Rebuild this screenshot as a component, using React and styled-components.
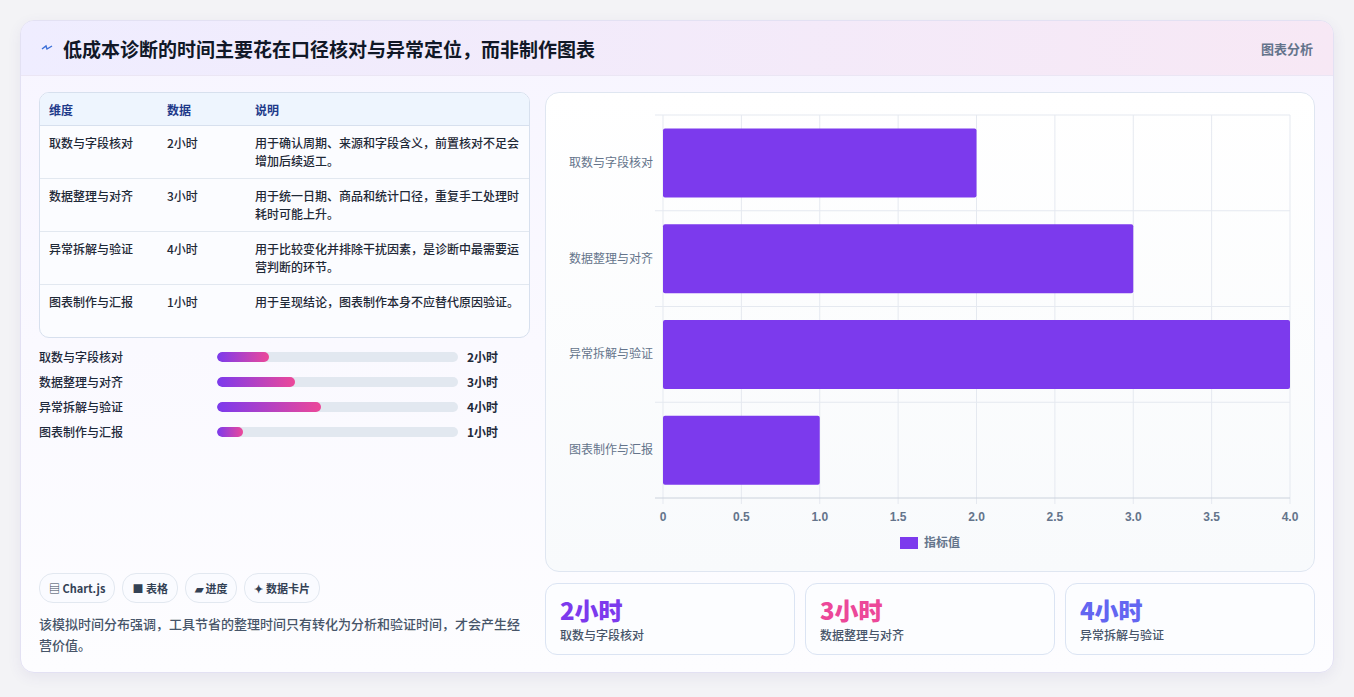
import React from 'react';
import styled, { createGlobalStyle } from 'styled-components';

const Global = createGlobalStyle`
  html, body { margin: 0; background: #f3f3f6; }
  body { font-family: "Noto Sans CJK SC", "Noto Sans", sans-serif; color: #1e293b; }
`;

const rows = [
  { name: '取数与字段核对', value: 2, note: '用于确认周期、来源和字段含义，前置核对不足会增加后续返工。' },
  { name: '数据整理与对齐', value: 3, note: '用于统一日期、商品和统计口径，重复手工处理时耗时可能上升。' },
  { name: '异常拆解与验证', value: 4, note: '用于比较变化并排除干扰因素，是诊断中最需要运营判断的环节。' },
  { name: '图表制作与汇报', value: 1, note: '用于呈现结论，图表制作本身不应替代原因验证。' },
];

const Page = styled.div`
  padding: 20px 20px 22px 20px;
`;
const Card = styled.div`
  background: linear-gradient(180deg, #f7f5ff 0%, #fdfdff 100%);
  border: 1px solid #e3e1f3;
  border-radius: 14px;
  overflow: hidden;
  box-shadow: 0 4px 14px rgba(80, 70, 140, 0.08);
`;
const Header = styled.div`
  height: 54px;
  display: flex;
  align-items: center;
  justify-content: space-between;
  padding: 0 20px;
  background: linear-gradient(90deg, #efedff 0%, #f7e8f5 100%);
  border-bottom: 1px solid #ebe6f4;
`;
const Title = styled.h1`
  margin: 0;
  font-size: 19px;
  font-weight: 700;
  color: #111827;
  display: flex;
  align-items: center;
  gap: 10px;
`;
const Tag = styled.span`
  font-size: 13px;
  color: #64748b;
  font-weight: 600;
`;
const Body = styled.div`
  display: grid;
  grid-template-columns: 491px 1fr;
  gap: 15px;
  padding: 16px 18px 17px 18px;
`;
const Left = styled.div`
  display: flex;
  flex-direction: column;
`;
const Table = styled.table`
  width: 100%;
  border-collapse: separate;
  border-spacing: 0;
  border: 1px solid #d7e0ee;
  border-radius: 10px;
  overflow: hidden;
  font-size: 12px;
  background: #fbfcff;
`;
const Th = styled.th`
  text-align: left;
  font-weight: 600;
  color: #1e3a8a;
  background: #eef5fe;
  height: 32px;
  padding: 0 9px;
  border-bottom: 1px solid #d7e0ee;
`;
const Td = styled.td`
  padding: 8px 9px;
  height: 36px;
  line-height: 18px;
  color: #1f2937;
  font-weight: 500;
  vertical-align: top;
  border-bottom: ${(p) => (p.last ? 'none' : '1px solid #e2e8f0')};
`;
const Progress = styled.div`
  margin-top: 10px;
  display: flex;
  flex-direction: column;
  gap: 9px;
`;
const PRow = styled.div`
  display: grid;
  grid-template-columns: 178px 241px 1fr;
  align-items: center;
  gap: 0;
  font-size: 12px;
  font-weight: 500;
  height: 16px;
`;
const Track = styled.div`
  height: 10px;
  background: #e2e8f0;
  border-radius: 5px;
  overflow: hidden;
`;
const Fill = styled.div`
  height: 100%;
  border-radius: 5px;
  background: linear-gradient(90deg, #7c3aed, #ec4899);
`;
const PVal = styled.span`
  padding-left: 9px;
  font-weight: 700;
`;
const Footer = styled.div`
  margin-top: auto;
`;
const Chips = styled.div`
  display: flex;
  gap: 7px;
`;
const Chip = styled.span`
  font-size: 11px;
  font-weight: 600;
  color: #334155;
  padding: 6px 9px;
  border: 1px solid #e2e8f0;
  border-radius: 14px;
  background: #fafbff;
`;
const Note = styled.p`
  margin: 10px 0 0 0;
  font-size: 13px;
  line-height: 21px;
  color: #475569;
  font-weight: 500;
`;
const Right = styled.div`
  display: flex;
  flex-direction: column;
  gap: 11px;
`;
const ChartBox = styled.div`
  height: 478px;
  border: 1px solid #dfe6f1;
  border-radius: 14px;
  background: linear-gradient(180deg, #ffffff, #f8fafc);
`;
const Stats = styled.div`
  display: grid;
  grid-template-columns: repeat(3, 1fr);
  gap: 10px;
`;
const Stat = styled.div`
  height: 72px;
  border: 1px solid #dbe4f3;
  border-radius: 12px;
  background: #fcfdff;
  padding: 10px 14px;
  box-sizing: border-box;
`;
const StatVal = styled.div`
  font-size: 24px;
  font-weight: 800;
  line-height: 32px;
  color: ${(p) => p.color};
`;
const StatLabel = styled.div`
  font-size: 12px;
  color: #475569;
  font-weight: 500;
`;

function Chart() {
  const x0 = 117, x1 = 744, y0 = 22, y1 = 405;
  const band = (y1 - y0) / 4;
  const sx = (v) => x0 + ((x1 - x0) * v) / 4;
  const ticks = [0, 0.5, 1, 1.5, 2, 2.5, 3, 3.5, 4];
  return (
    <svg width="768" height="478" viewBox="0 0 768 478">
      {ticks.map((t) => (
        <line key={t} x1={sx(t)} x2={sx(t)} y1={y0} y2={y1 + 6} stroke="#e5e9f0" />
      ))}
      {[0, 1, 2, 3].map((i) => (
        <line key={i} x1={x0 - 8} x2={x1} y1={y0 + band * i} y2={y0 + band * i} stroke="#e5e9f0" />
      ))}
      <line x1={x0 - 8} x2={x1} y1={y1} y2={y1} stroke="#cbd2dc" />
      {rows.map((r, i) => {
        const cy = y0 + band * i + band / 2;
        return (
          <g key={r.name}>
            <rect x={x0} y={cy - 34.5} width={sx(r.value) - x0} height={69} rx="2" fill="#7c3aed" />
            <text x={x0 - 10} y={cy + 4} textAnchor="end" fontSize="12" fill="#64748b">{r.name}</text>
          </g>
        );
      })}
      {ticks.map((t) => (
        <text key={t} x={sx(t)} y={428} textAnchor="middle" fontSize="12" fontWeight="700" fill="#64748b"
          fontFamily="Liberation Sans, sans-serif">{t === 0 ? '0' : t.toFixed(1)}</text>
      ))}
      <rect x="354" y="444" width="18" height="12" fill="#7c3aed" />
      <text x="378" y="454" fontSize="12" fontWeight="600" fill="#64748b">指标值</text>
    </svg>
  );
}

export default function App() {
  return (
    <Page>
      <Global />
      <Card>
        <Header>
          <Title>
            <svg width="12" height="12" viewBox="0 0 12 12">
              <path d="M1 7 L5 4 L6 7 L11 4" stroke="#3b6fd8" strokeWidth="1.4" fill="none" />
            </svg>
            低成本诊断的时间主要花在口径核对与异常定位，而非制作图表
          </Title>
          <Tag>图表分析</Tag>
        </Header>
        <Body>
          <Left>
            <Table>
              <thead>
                <tr>
                  <Th style={{ width: 100 }}>维度</Th>
                  <Th style={{ width: 70 }}>数据</Th>
                  <Th>说明</Th>
                </tr>
              </thead>
              <tbody>
                {rows.map((r, i) => (
                  <tr key={r.name}>
                    <Td last={i === 3}>{r.name}</Td>
                    <Td last={i === 3}>{r.value}小时</Td>
                    <Td last={i === 3}>{r.note}</Td>
                  </tr>
                ))}
              </tbody>
            </Table>
            <Progress>
              {rows.map((r) => (
                <PRow key={r.name}>
                  <span>{r.name}</span>
                  <Track><Fill style={{ width: `${r.value * 10.8}%` }} /></Track>
                  <PVal>{r.value}小时</PVal>
                </PRow>
              ))}
            </Progress>
            <Footer>
              <Chips>
                <Chip>▤ Chart.js</Chip>
                <Chip>■ 表格</Chip>
                <Chip>▰ 进度</Chip>
                <Chip>✦ 数据卡片</Chip>
              </Chips>
              <Note>该模拟时间分布强调，工具节省的整理时间只有转化为分析和验证时间，才会产生经营价值。</Note>
            </Footer>
          </Left>
          <Right>
            <ChartBox><Chart /></ChartBox>
            <Stats>
              <Stat><StatVal color="#7c3aed">2小时</StatVal><StatLabel>取数与字段核对</StatLabel></Stat>
              <Stat><StatVal color="#ec4899">3小时</StatVal><StatLabel>数据整理与对齐</StatLabel></Stat>
              <Stat><StatVal color="#6366f1">4小时</StatVal><StatLabel>异常拆解与验证</StatLabel></Stat>
            </Stats>
          </Right>
        </Body>
      </Card>
    </Page>
  );
}
